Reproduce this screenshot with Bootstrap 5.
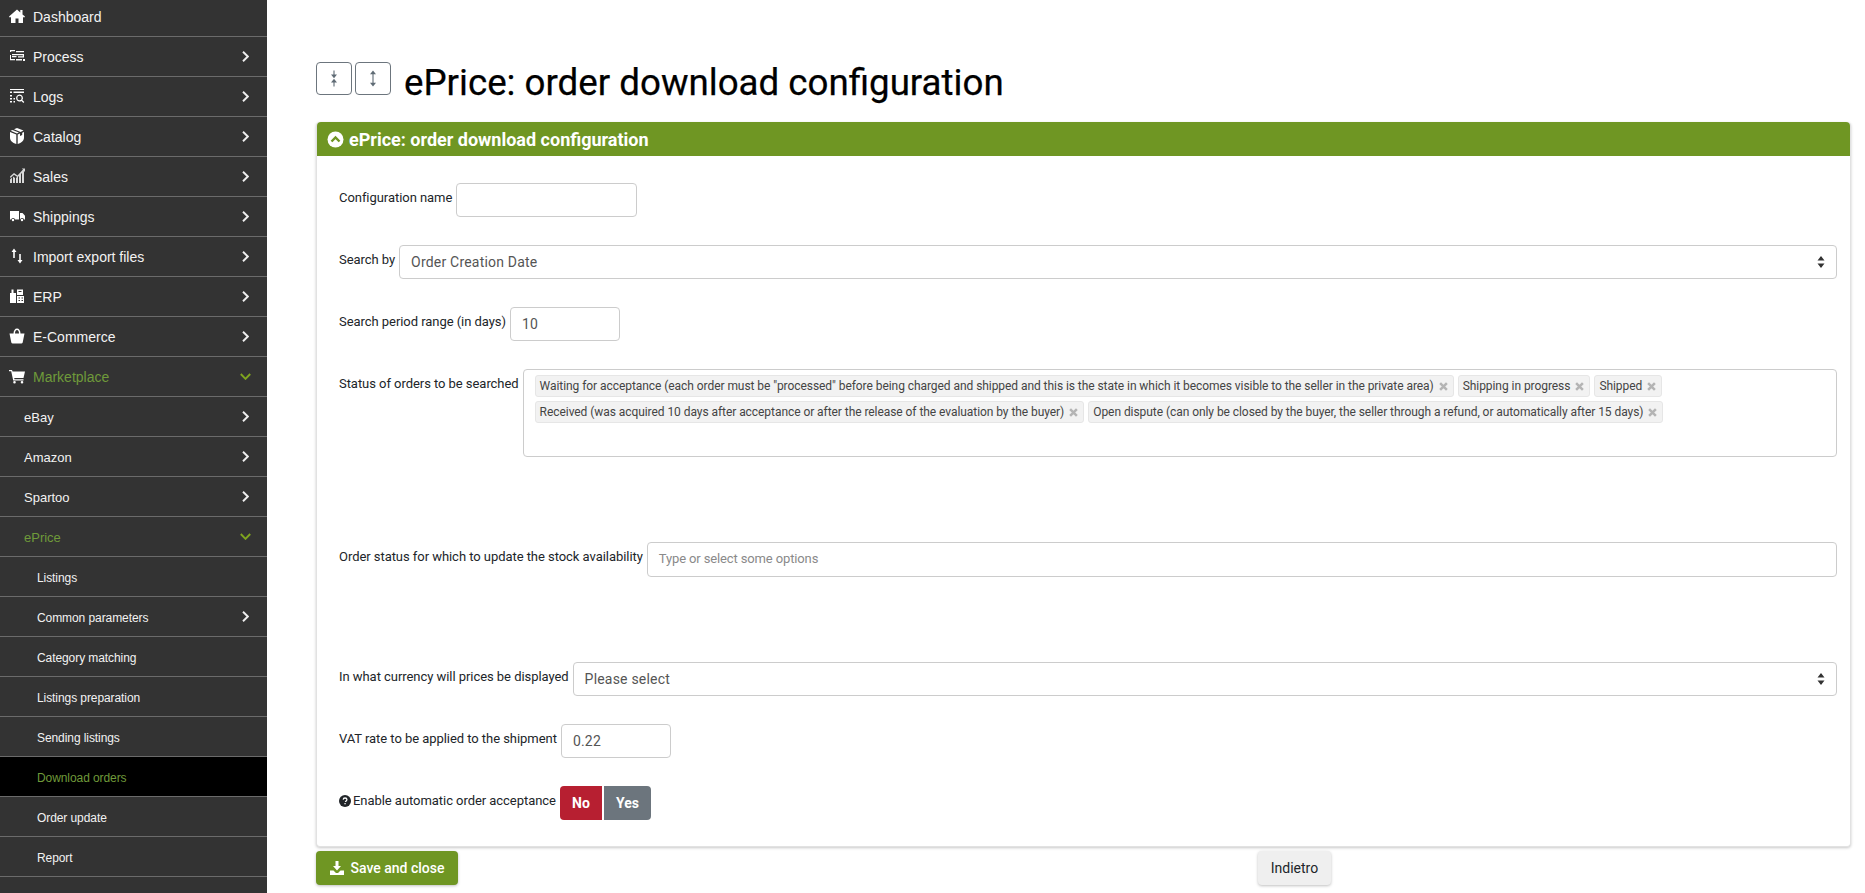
<!DOCTYPE html>
<html lang="en">
<head>
<meta charset="utf-8">
<title>ePrice: order download configuration</title>
<link href="https://cdn.jsdelivr.net/npm/bootstrap@5.3.0/dist/css/bootstrap.min.css" rel="stylesheet">
<style>
html,body{height:100%;overflow:hidden}
body{font-family:Roboto,"Liberation Sans",sans-serif;font-size:13px;color:#212529;background:#fff}
.shell{height:893px;overflow:hidden}
.side{width:267px;flex:0 0 267px;height:893px;overflow:hidden;background:#333;font-family:"Liberation Sans",Arial,sans-serif}
.side-inner{margin-top:-3px}
.mi{position:relative;height:40px;border-bottom:1px solid #6b6b6b;color:#f2f2f2;font-size:14px;padding:2px 18px 0 33px;display:flex;align-items:center;justify-content:space-between;text-decoration:none}
.mi .ico{position:absolute;left:9px;top:11px;width:16px;height:16px;fill:#fff}
.mi .ico.dim{fill:#d8d8d8}
.mi.l2{font-size:13px;padding-left:24px}
.mi.l3{font-size:12px;padding-left:37px;letter-spacing:-.08px}
.mi.on{color:#6f9a3a}
.mi.cur{background:#000;color:#6f9a3a}
.chev{width:7px;height:11px;fill:none;stroke:#eee;stroke-width:1.9;margin-top:-2px}
.chev-d{width:11px;height:7px;fill:none;stroke:#7fa51e;stroke-width:1.9;margin-right:-2px;margin-top:-2px}
.main{flex:1 1 auto;padding:62px 14px 0 49px;min-width:0}
.tools{height:33px;margin-bottom:27px}
.tbtn{width:36px;height:33px;border:1px solid #6c757d;border-radius:4px;background:#fff;padding:0;display:flex;align-items:center;justify-content:center;margin-right:3px}
.tbtn svg{width:8px;height:17px;fill:#5f6b75;stroke:#5f6b75;stroke-width:1.1}
.ptitle{font-size:36.7px;font-weight:400;color:#000;margin:7px 0 0 10px;line-height:33px;font-family:Roboto,sans-serif;-webkit-text-stroke:.25px #000}
.panel{border:1px solid #e2e2e2;border-top:0;border-radius:4px;box-shadow:0 1px 3px rgba(0,0,0,.22);height:725px;background:#fff}
.phead{background:#6f9623;color:#fff;height:34px;font-size:18px;font-weight:700;padding:0 10px;border-radius:4px 4px 0 0;display:flex;align-items:center;gap:5px}
.phead svg{width:17px;height:17px}
.pbody{padding:27px 13px 0 22px}
.fld{display:flex;align-items:flex-start;gap:4px;margin-bottom:28px}
.fld.tall{margin-bottom:85px}
.lbl{margin:0;padding-top:7px;line-height:16px;white-space:nowrap;color:#212529;font-size:13px;letter-spacing:-.05px}
.ctl{height:34px;border:1px solid #ccc;border-radius:4px;font-size:14px;color:#555;padding:0 11px;box-shadow:none;font-family:Roboto,sans-serif;letter-spacing:.2px}
.ctl.form-select{background-image:url("data:image/svg+xml,%3Csvg xmlns='http://www.w3.org/2000/svg' viewBox='0 0 8 12'%3E%3Cpath fill='%23333' d='M4 0l3.500 4.500h-7zM4 12L.5 7.500h7z'/%3E%3C/svg%3E");background-size:8px 12px;background-position:right 11px center}
.w181{width:181px;flex:none}
.w110{width:110px;flex:none}
.grow{flex:1 1 auto;width:auto;min-width:0}
.chosen{flex:1 1 auto;height:88px;border:1px solid #ccc;border-radius:4px;padding:5px 11px;display:flex;flex-wrap:wrap;align-content:flex-start;gap:4px;background:#fff}
.tagx{background:#f2f2f2;border:1px solid #e6e6e6;border-radius:3px;height:22px;padding:0 5px 0 4px;font-size:12px;letter-spacing:-.06px;color:#444;display:inline-flex;align-items:center;gap:5px;white-space:nowrap}
.tagx svg{width:9px;height:9px;stroke:#b4b4b4;stroke-width:2.2;fill:none}
.chinput{flex:1 1 auto;height:35px;border:1px solid #ccc;border-radius:4px;padding:0 11px 2px;display:flex;align-items:center;color:#8a8a8a;font-size:13px;letter-spacing:-.13px}
.bno{background:#b71f31;border:0;color:#fff;font-weight:700;font-size:14px;width:42px;height:34px;padding:0;border-radius:4px 0 0 4px}
.byes{background:#6c757d;border:0;color:#fff;font-weight:700;font-size:14px;width:47px;height:34px;padding:0;margin-left:2px;border-radius:0 4px 4px 0}
.qi{width:12px;height:12px;vertical-align:-2px;margin-right:2px}
.foot{margin-top:4px}
.bsave{background:#6f9623;border:0;color:#fff;font-size:14px;font-weight:500;height:34px;width:142px;padding:0;border-radius:4px;box-shadow:0 1px 3px rgba(0,0,0,.25);display:flex;align-items:center;justify-content:center;gap:7px}
.bsave svg{width:14px;height:14px;fill:#fff}
.bback{background:#efefef;border:0;color:#212529;font-size:14px;height:34px;width:73px;padding:0;border-radius:4px;box-shadow:0 1px 3px rgba(0,0,0,.25);margin-left:800px}
</style>
</head>
<body>
<div class="shell d-flex">
<nav class="side">
<div class="side-inner">
<a class="mi"><svg class="ico" viewBox="0 0 16 16"><path d="M8 1.500L0 8.600l1 1.100 1-.9V15h4.500v-4.500h3V15H14V8.800l1 .9 1-1.100-2.500-2.200V2h-2.200v2.400z"/></svg><span>Dashboard</span></a>
<a class="mi"><svg class="ico" viewBox="0 0 16 16"><path d="M1 2h5v1.200H2.200v.8H1zM7 3h8v1.200H7zM3 6h12v3.500H9V8.300h4.800V7.200H3zM1 7h1v4h4v1.200H1zM3 8h4.500v1.200H3zM7 11h6v1.500H7zM14 11h2v2h-2z"/></svg><span>Process</span><svg class="chev" viewBox="0 0 7 11"><path d="M1 .8L5.800 5.500 1 10.200"/></svg></a>
<a class="mi"><svg class="ico" viewBox="0 0 16 16"><path d="M1 1h14v1H1zM1 3.500h2v1.500H1zM4.500 3.500H15v1.500H4.500zM1 7h2v1.500H1zM1 10h2v1.500H1zM1 13h2v1.500H1zM4.500 10h1.500v1.500H4.500zM4.500 13h1.500v1.500H4.500zM10.500 6.500a3.500 3.500 0 0 1 2.800 5.600l2 2-.9.9-2-2a3.500 3.500 0 1 1-1.900-6.500zm0 1.300a2.200 2.200 0 1 0 0 4.400 2.200 2.200 0 0 0 0-4.400z"/></svg><span>Logs</span><svg class="chev" viewBox="0 0 7 11"><path d="M1 .8L5.800 5.500 1 10.200"/></svg></a>
<a class="mi"><svg class="ico" viewBox="0 0 16 16"><path d="M8 0l6.500 2.600-3 1.300L5 1.300zM3.500 2l6.400 2.600L8 5.400 1.500 2.800zM1 4l6.300 2.600V16C3.500 14.800 1 12.800 1 9.500zM15 4v5.500c0 3.300-2.500 5.300-6.300 6.500V6.600l2.300-1v2.400l2.200-.9V4.700z"/></svg><span>Catalog</span><svg class="chev" viewBox="0 0 7 11"><path d="M1 .8L5.800 5.500 1 10.200"/></svg></a>
<a class="mi"><svg class="ico dim" viewBox="0 0 16 16"><path d="M1 15v-3.500l2-2V15zM4 15V8.500l2 1.500v5zM7 15v-5l2-2v7zM10 15V7l2-2v10zM13 15V4l2-1.500V15zM1 8.500L5 5l3.500 2.500L14 1.500l-1.200-1H16V4l-1-1-6.300 6.300L5 6.700 1.500 10z"/></svg><span>Sales</span><svg class="chev" viewBox="0 0 7 11"><path d="M1 .8L5.800 5.500 1 10.200"/></svg></a>
<a class="mi"><svg class="ico" viewBox="0 0 16 16"><path d="M1 3h9v8.500H6a2 2 0 0 0-3.800 0H1zM11 5h2.500L16 7.700v3.800h-1a2 2 0 0 0-3.800 0H11zM4 10.800a1.200 1.200 0 1 1 0 2.400 1.200 1.200 0 0 1 0-2.400zM13 10.800a1.200 1.200 0 1 1 0 2.400 1.200 1.200 0 0 1 0-2.400z"/></svg><span>Shippings</span><svg class="chev" viewBox="0 0 7 11"><path d="M1 .8L5.800 5.500 1 10.200"/></svg></a>
<a class="mi"><svg class="ico" viewBox="0 0 16 16"><path d="M5 0.500L7.500 4H5.800v6H4.200V4H2.500zM10.200 6h1.600v6h1.700L11 15.500 8.500 12h1.700z"/></svg><span>Import export files</span><svg class="chev" viewBox="0 0 7 11"><path d="M1 .8L5.800 5.500 1 10.200"/></svg></a>
<a class="mi"><svg class="ico" viewBox="0 0 16 16"><path fill-rule="evenodd" d="M1 15V5h1.500V1.500h2V5H7v10zM8 1.500h6V7H8zM9.500 3v1h3V3zM8 8h7v7H8zM9.500 9.500v1h1.500v-1zM12.500 9.500v1H14v-1zM9.500 12v1h1.500v-1zM12.500 12v1H14v-1z"/></svg><span>ERP</span><svg class="chev" viewBox="0 0 7 11"><path d="M1 .8L5.800 5.500 1 10.200"/></svg></a>
<a class="mi"><svg class="ico" viewBox="0 0 16 16"><path d="M.5 5.500h15l-1.800 9a1.500 1.500 0 0 1-1.500 1H3.800a1.500 1.500 0 0 1-1.500-1zM4.500 5.500C4.500 2.500 6 .5 8 .5s3.500 2 3.500 5H10C10 3.200 9.200 2 8 2S6 3.200 6 5.500z"/></svg><span>E-Commerce</span><svg class="chev" viewBox="0 0 7 11"><path d="M1 .8L5.800 5.500 1 10.200"/></svg></a>
<a class="mi on"><svg class="ico" viewBox="0 0 16 16"><path d="M0 2h3l.6 1.500H16l-1.500 6.500H5.200l.3 1.300h9v1.200H4.200L2.200 3.200H0zM5.500 13a1.300 1.300 0 1 1 0 2.600 1.300 1.300 0 0 1 0-2.600zM13 13a1.300 1.300 0 1 1 0 2.600 1.300 1.300 0 0 1 0-2.600z"/></svg><span>Marketplace</span><svg class="chev-d" viewBox="0 0 11 7"><path d="M.8 1l4.700 4.800L10.200 1"/></svg></a>
<a class="mi l2"><span>eBay</span><svg class="chev" viewBox="0 0 7 11"><path d="M1 .8L5.800 5.500 1 10.200"/></svg></a>
<a class="mi l2"><span>Amazon</span><svg class="chev" viewBox="0 0 7 11"><path d="M1 .8L5.800 5.500 1 10.200"/></svg></a>
<a class="mi l2"><span>Spartoo</span><svg class="chev" viewBox="0 0 7 11"><path d="M1 .8L5.800 5.500 1 10.200"/></svg></a>
<a class="mi l2 on"><span>ePrice</span><svg class="chev-d" viewBox="0 0 11 7"><path d="M.8 1l4.700 4.800L10.200 1"/></svg></a>
<a class="mi l3"><span>Listings</span></a>
<a class="mi l3"><span>Common parameters</span><svg class="chev" viewBox="0 0 7 11"><path d="M1 .8L5.800 5.500 1 10.200"/></svg></a>
<a class="mi l3"><span>Category matching</span></a>
<a class="mi l3"><span>Listings preparation</span></a>
<a class="mi l3"><span>Sending listings</span></a>
<a class="mi l3 cur"><span>Download orders</span></a>
<a class="mi l3"><span>Order update</span></a>
<a class="mi l3"><span>Report</span></a>
</div>
</nav>
<main class="main">
<div class="tools d-flex align-items-center">
<button class="tbtn" type="button" aria-label="Collapse"><svg viewBox="0 0 8 17"><path d="M4 .5v6M4 10.500v6"/><path stroke="none" d="M1 4.500h6L4 8.300zM1 12.500h6L4 8.700z"/></svg></button>
<button class="tbtn" type="button" aria-label="Expand"><svg viewBox="0 0 8 17"><path d="M4 3v11"/><path stroke="none" d="M1 4.300h6L4 .5zM1 12.700h6L4 16.500z"/></svg></button>
<h1 class="ptitle">ePrice: order download configuration</h1>
</div>
<section class="panel">
<div class="phead"><svg viewBox="0 0 17 17"><circle cx="8.500" cy="8.500" r="8" fill="#fff"/><path d="M4.500 10.500l4-4 4 4" fill="none" stroke="#6f9623" stroke-width="2.400"/></svg><span>ePrice: order download configuration</span></div>
<div class="pbody">
<div class="fld"><label class="lbl">Configuration name</label><input class="form-control ctl w181" type="text"></div>
<div class="fld"><label class="lbl">Search by</label><select class="form-select ctl grow"><option>Order Creation Date</option></select></div>
<div class="fld"><label class="lbl">Search period range (in days)</label><input class="form-control ctl w110" type="text" value="10"></div>
<div class="fld tall"><label class="lbl">Status of orders to be searched</label>
<div class="chosen">
<span class="tagx">Waiting for acceptance (each order must be "processed" before being charged and shipped and this is the state in which it becomes visible to the seller in the private area) <svg viewBox="0 0 8 8"><path d="M1 1l6 6M7 1L1 7"/></svg></span>
<span class="tagx">Shipping in progress <svg viewBox="0 0 8 8"><path d="M1 1l6 6M7 1L1 7"/></svg></span>
<span class="tagx">Shipped <svg viewBox="0 0 8 8"><path d="M1 1l6 6M7 1L1 7"/></svg></span>
<span class="tagx">Received (was acquired 10 days after acceptance or after the release of the evaluation by the buyer) <svg viewBox="0 0 8 8"><path d="M1 1l6 6M7 1L1 7"/></svg></span>
<span class="tagx">Open dispute (can only be closed by the buyer, the seller through a refund, or automatically after 15 days) <svg viewBox="0 0 8 8"><path d="M1 1l6 6M7 1L1 7"/></svg></span>
</div></div>
<div class="fld tall"><label class="lbl">Order status for which to update the stock availability</label><div class="chinput">Type or select some options</div></div>
<div class="fld"><label class="lbl">In what currency will prices be displayed</label><select class="form-select ctl grow"><option>Please select</option></select></div>
<div class="fld"><label class="lbl">VAT rate to be applied to the shipment</label><input class="form-control ctl w110" type="text" value="0.22"></div>
<div class="fld"><label class="lbl"><svg class="qi" viewBox="0 0 12 12"><circle cx="6" cy="6" r="6" fill="#212529"/><path d="M4.200 4.600C4.300 3.500 5 3 6 3s1.900.6 1.900 1.600c0 1.300-1.400 1.300-1.400 2.400" fill="none" stroke="#fff" stroke-width="1.300"/><rect x="5.400" y="8" width="1.300" height="1.300" fill="#fff"/></svg>Enable automatic order acceptance</label><div class="d-flex"><button class="btn bno" type="button">No</button><button class="btn byes" type="button">Yes</button></div></div>
</div>
</section>
<div class="foot d-flex">
<button class="btn bsave" type="button"><svg viewBox="0 0 14 14"><path d="M5.500 0h3v5H11L7 9.500 3 5h2.500zM0 9.500h3.500L6 12h2l2.500-2.500H14V14H0z"/></svg><span>Save and close</span></button>
<button class="btn bback" type="button">Indietro</button>
</div>
</main>
</div>
<script src="https://cdn.jsdelivr.net/npm/bootstrap@5.3.0/dist/js/bootstrap.bundle.min.js"></script>
</body>
</html>
